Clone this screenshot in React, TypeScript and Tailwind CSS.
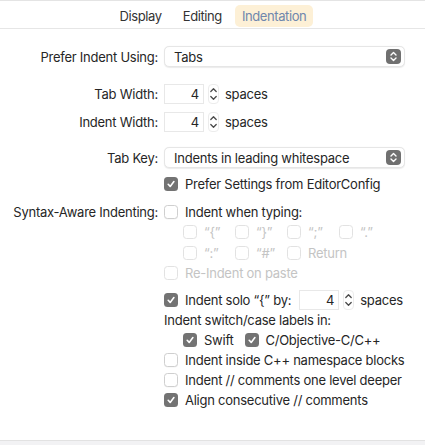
import React from 'react';

const font = { fontFamily: 'Inter, "Liberation Sans", sans-serif' };

// 复选框
const Check: React.FC<{ checked?: boolean; disabled?: boolean }> = ({ checked, disabled }) => (
  <span
    className={`inline-flex h-[14px] w-[14px] shrink-0 items-center justify-center rounded-[3.5px] ${
      checked
        ? 'bg-[#737373]'
        : disabled
        ? 'border border-[#e2e2e2] bg-white'
        : 'border border-[#cfcfcf] bg-white shadow-[0_0.5px_0.5px_rgba(0,0,0,0.05)]'
    }`}
  >
    {checked && (
      <svg width="10" height="10" viewBox="0 0 10 10">
        <path d="M2.2 5.3 L4.2 7.4 L7.9 2.6" fill="none" stroke="white" strokeWidth="1.6" strokeLinecap="round" strokeLinejoin="round" />
      </svg>
    )}
  </span>
);

const CheckRow: React.FC<{ checked?: boolean; disabled?: boolean; label: string; className?: string }> = ({
  checked,
  disabled,
  label,
  className = '',
}) => (
  <div className={`flex h-5 items-center gap-[7px] ${className}`}>
    <Check checked={checked} disabled={disabled} />
    <span className={disabled ? 'text-[#c4c4c4]' : 'text-[#262626]'}>{label}</span>
  </div>
);

// 弹出菜单
const Select: React.FC<{ value: string }> = ({ value }) => (
  <div className="flex h-[21px] w-[241px] items-center justify-between rounded-[5px] border border-[#e6e6e6] bg-white pl-[9px] pr-[3px] shadow-[0_0.5px_1px_rgba(0,0,0,0.08)]">
    <span className="text-[#262626]">{value}</span>
    <span className="flex h-[15px] w-[15px] items-center justify-center rounded-[4px] bg-[#707070]">
      <svg width="9" height="11" viewBox="0 0 9 11">
        <path d="M2 4 L4.5 1.6 L7 4 M2 7 L4.5 9.4 L7 7" fill="none" stroke="white" strokeWidth="1.4" strokeLinecap="round" strokeLinejoin="round" />
      </svg>
    </span>
  </div>
);

// 数字输入 + 步进器
const Stepper: React.FC<{ value: string }> = ({ value }) => (
  <div className="flex h-5 items-center">
    <div className="flex h-[20px] w-[40px] items-center justify-end border border-[#e8e8e8] bg-white pr-[4px] text-[#262626]">
      {value}
    </div>
    <span className="ml-[4px] flex h-[20px] w-[11px] flex-col items-center justify-center rounded-[4px] border border-[#ececec] bg-white">
      <svg width="9" height="16" viewBox="0 0 9 16">
        <path d="M1.8 5.5 L4.5 2.8 L7.2 5.5 M1.8 10.5 L4.5 13.2 L7.2 10.5" fill="none" stroke="#4a4a4a" strokeWidth="1.3" strokeLinecap="round" strokeLinejoin="round" />
      </svg>
    </span>
    <span className="ml-[6px] text-[#262626]">spaces</span>
  </div>
);

const Row: React.FC<{ label?: string; className?: string; children: React.ReactNode }> = ({ label, className = '', children }) => (
  <div className={`flex min-h-5 items-center ${className}`}>
    <div className="w-[158px] shrink-0 text-right text-[#262626]">{label}</div>
    <div className="ml-[6px] flex-1">{children}</div>
  </div>
);

const App: React.FC = () => {
  return (
    <div className="flex h-[445px] w-[425px] flex-col bg-white text-[13px] leading-5 tracking-[-0.25px]" style={font}>
      {/* 顶部 Tab 栏 */}
      <div className="border-t-[1.5px] border-[#e4e4e4]">
        <div className="flex h-[28px] items-center justify-center border-b border-[#e6e6e6] pt-[2px]">
          <div className="flex items-center gap-[5px] tracking-[-0.4px]">
            <span className="px-[8px] py-[1px] text-[#333333]">Display</span>
            <span className="px-[8px] py-[1px] text-[#333333]">Editing</span>
            <span className="rounded-[5px] bg-[#fdf0d6] px-[7px] py-[1px] text-[#6f87ad]">Indentation</span>
          </div>
        </div>
      </div>

      {/* 配置内容 */}
      <div className="flex flex-1 flex-col pt-[17px]">
        <Row label="Prefer Indent Using:">
          <Select value="Tabs" />
        </Row>
        <Row label="Tab Width:" className="mt-[17px]">
          <Stepper value="4" />
        </Row>
        <Row label="Indent Width:" className="mt-[8px]">
          <Stepper value="4" />
        </Row>
        <Row label="Tab Key:" className="mt-[15px]">
          <Select value="Indents in leading whitespace" />
        </Row>
        <Row className="mt-[6px]">
          <CheckRow checked label="Prefer Settings from EditorConfig" />
        </Row>
        <Row label="Syntax-Aware Indenting:" className="mt-[8px]">
          <CheckRow label="Indent when typing:" />
        </Row>
        <Row>
          <div className="grid grid-cols-[52px_52px_52px_52px] pl-[19px]">
            <CheckRow disabled label="“{”" />
            <CheckRow disabled label="“}”" />
            <CheckRow disabled label="“;”" />
            <CheckRow disabled label="“.”" />
          </div>
        </Row>
        <Row className="mt-[1px]">
          <div className="grid grid-cols-[52px_52px_60px] pl-[19px]">
            <CheckRow disabled label="“:”" />
            <CheckRow disabled label="“#”" />
            <CheckRow disabled label="Return" />
          </div>
        </Row>
        <Row>
          <CheckRow disabled label="Re-Indent on paste" />
        </Row>
        <Row className="mt-[7px]">
          <div className="flex items-center gap-[8px]">
            <CheckRow checked label="Indent solo “{” by:" />
            <Stepper value="4" />
          </div>
        </Row>
        <Row>
          <span className="text-[#262626]">Indent switch/case labels in:</span>
        </Row>
        <Row>
          <div className="flex items-center gap-[11px] pl-[19px]">
            <CheckRow checked label="Swift" />
            <CheckRow checked label="C/Objective-C/C++" />
          </div>
        </Row>
        <Row>
          <CheckRow label="Indent inside C++ namespace blocks" />
        </Row>
        <Row>
          <CheckRow label="Indent // comments one level deeper" />
        </Row>
        <Row>
          <CheckRow checked label="Align consecutive // comments" />
        </Row>
      </div>

      {/* 底部栏 */}
      <div className="h-[5px] border-t border-[#e2e2e2] bg-[#f2f2f4]" />
    </div>
  );
};

export default App;
